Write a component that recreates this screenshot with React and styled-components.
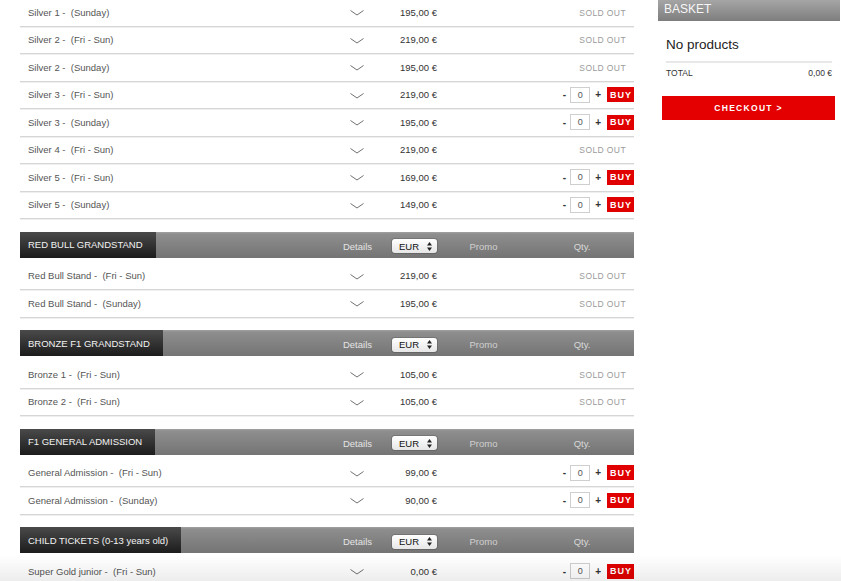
import React from "react";
import styled, { createGlobalStyle } from "styled-components";

const GlobalStyle = createGlobalStyle`
  html, body {
    margin: 0;
    padding: 0;
    background: #fff;
    font-family: "Liberation Sans", Arial, sans-serif;
  }
`;

const COLS = "1fr 45px 57px 93px 104px";

const Page = styled.div`
  display: flex;
  align-items: flex-start;
  gap: 24px;
  padding-left: 20px;
  height: 581px;
  overflow: hidden;
`;

const List = styled.div`
  width: 614px;
  margin-top: -1px;
  flex-shrink: 0;
`;

const Section = styled.div`
  margin-bottom: 12.5px;
`;

const Header = styled.div`
  display: grid;
  grid-template-columns: ${COLS};
  align-items: center;
  height: 26px;
  margin-bottom: 5px;
  background: linear-gradient(#a2a2a2 0, #8e8e8e 2px, #747474 100%);
`;

const Label = styled.div`
  justify-self: start;
  height: 100%;
  display: flex;
  align-items: center;
  padding: 0 13px 0 8px;
  background: linear-gradient(#4a4a4a, #1c1c1c);
  color: #f2f2f2;
  font-size: 9.5px;
  white-space: nowrap;
`;

const HeadText = styled.div`
  justify-self: ${(p) => p.$align || "center"};
  padding-top: 3px;
  color: ${(p) => p.$color || "#e4e4e4"};
  font-size: 9.5px;
`;

const Select = styled.div`
  justify-self: end;
  box-sizing: border-box;
  width: 45px;
  height: 14px;
  margin-top: 3px;
  padding: 0 5px 0 7px;
  display: flex;
  align-items: center;
  justify-content: space-between;
  border-radius: 3px;
  background: linear-gradient(#ffffff, #e6e6e6);
  box-shadow: 0 0 0 1px rgba(0, 0, 0, 0.15);
  font-size: 9.5px;
  color: #111;
`;

const Row = styled.div`
  display: grid;
  grid-template-columns: ${COLS};
  align-items: center;
  box-sizing: border-box;
  height: 27.5px;
  border-bottom: 1px solid #d6d6d6;
  box-shadow: 0 1px 0 #efefef;
`;

const Name = styled.div`
  padding-left: 8px;
  color: #555;
  font-size: 9.5px;
  white-space: pre;
`;

const Chevron = styled.svg`
  justify-self: center;
  margin-left: -2px;
  margin-top: 2px;
`;

const Price = styled.div`
  justify-self: end;
  color: #333;
  font-size: 9.5px;
  white-space: nowrap;
`;

const QtyCell = styled.div`
  grid-column: 5;
  justify-self: end;
  display: flex;
  align-items: center;
`;

const SoldOut = styled.span`
  margin: 1px 8px 0 0;
  color: #9a9a9a;
  font-size: 8.5px;
  letter-spacing: 0.4px;
`;

const Sign = styled.span`
  color: #333;
  font-size: 10px;
  font-weight: bold;
  margin: 0 ${(p) => p.$gap}px 0 0;
`;

const QtyInput = styled.div`
  box-sizing: border-box;
  width: 20px;
  height: 16px;
  margin-right: 5px;
  display: flex;
  align-items: center;
  justify-content: center;
  border: 1px solid #cfcfcf;
  background: #fff;
  color: #555;
  font-size: 9px;
`;

const Buy = styled.span`
  width: 27px;
  height: 15px;
  display: flex;
  align-items: center;
  justify-content: center;
  background: #e00000;
  color: #fff;
  font-size: 9px;
  font-weight: bold;
  letter-spacing: 1px;
  padding-left: 1px;
  box-sizing: border-box;
`;

const Basket = styled.aside`
  width: 182px;
  flex-shrink: 0;
`;

const BasketHead = styled.div`
  height: 21px;
  box-sizing: border-box;
  padding: 2px 0 0 6px;
  background: linear-gradient(#a5a5a5, #7e7e7e);
  color: #f6f6f6;
  font-size: 12px;
`;

const BasketBody = styled.div`
  padding: 16px 8px 0 8px;
`;

const Empty = styled.div`
  font-size: 13.5px;
  color: #222;
  padding-bottom: 9px;
  border-bottom: 2px solid #e8e8e8;
`;

const TotalRow = styled.div`
  display: flex;
  justify-content: space-between;
  padding-top: 5px;
  font-size: 8.5px;
  color: #333;
`;

const Checkout = styled.div`
  margin: 18px 5px 0 4px;
  height: 24px;
  display: flex;
  align-items: center;
  justify-content: center;
  background: #e40000;
  color: #fff;
  font-size: 8.5px;
  font-weight: bold;
  letter-spacing: 1.3px;
`;

const Fade = styled.div`
  position: fixed;
  left: 0;
  right: 0;
  bottom: 0;
  height: 26px;
  pointer-events: none;
  background: linear-gradient(rgba(0, 0, 0, 0), rgba(0, 0, 0, 0.07));
`;

const sections = [
  {
    title: null,
    rows: [
      ["Silver 1 -  (Sunday)", "195,00 €", false],
      ["Silver 2 -  (Fri - Sun)", "219,00 €", false],
      ["Silver 2 -  (Sunday)", "195,00 €", false],
      ["Silver 3 -  (Fri - Sun)", "219,00 €", true],
      ["Silver 3 -  (Sunday)", "195,00 €", true],
      ["Silver 4 -  (Fri - Sun)", "219,00 €", false],
      ["Silver 5 -  (Fri - Sun)", "169,00 €", true],
      ["Silver 5 -  (Sunday)", "149,00 €", true],
    ],
  },
  {
    title: "RED BULL GRANDSTAND",
    rows: [
      ["Red Bull Stand -  (Fri - Sun)", "219,00 €", false],
      ["Red Bull Stand -  (Sunday)", "195,00 €", false],
    ],
  },
  {
    title: "BRONZE F1 GRANDSTAND",
    rows: [
      ["Bronze 1 -  (Fri - Sun)", "105,00 €", false],
      ["Bronze 2 -  (Fri - Sun)", "105,00 €", false],
    ],
  },
  {
    title: "F1 GENERAL ADMISSION",
    rows: [
      ["General Admission -  (Fri - Sun)", "99,00 €", true],
      ["General Admission -  (Sunday)", "90,00 €", true],
    ],
  },
  {
    title: "CHILD TICKETS (0-13 years old)",
    rows: [["Super Gold junior -  (Fri - Sun)", "0,00 €", true]],
  },
];

const Ticket = ({ name, price, available }) => (
  <Row>
    <Name>{name}</Name>
    <Chevron width="14" height="6" viewBox="0 0 14 6">
      <polyline points="0.5,0.5 7,5 13.5,0.5" fill="none" stroke="#707070" strokeWidth="1" />
    </Chevron>
    <Price>{price}</Price>
    <QtyCell>
      {available ? (
        <>
          <Sign $gap={4}>-</Sign>
          <QtyInput>0</QtyInput>
          <Sign $gap={6}>+</Sign>
          <Buy>BUY</Buy>
        </>
      ) : (
        <SoldOut>SOLD OUT</SoldOut>
      )}
    </QtyCell>
  </Row>
);

const App = () => {
  return (
    <>
      <GlobalStyle />
      <Page>
        <List>
          {sections.map((s, i) => (
            <Section key={i}>
              {s.title && (
                <Header>
                  <Label>{s.title}</Label>
                  <HeadText>Details</HeadText>
                  <Select>
                    EUR
                    <svg width="5" height="9" viewBox="0 0 5 9">
                      <polygon points="2.5,0 5,3.5 0,3.5" fill="#222" />
                      <polygon points="0,5.5 5,5.5 2.5,9" fill="#222" />
                    </svg>
                  </Select>
                  <HeadText $color="#d0d0d0">Promo</HeadText>
                  <HeadText $color="#d8d8d8">Qty.</HeadText>
                </Header>
              )}
              {s.rows.map((r) => (
                <Ticket key={r[0]} name={r[0]} price={r[1]} available={r[2]} />
              ))}
            </Section>
          ))}
        </List>
        <Basket>
          <BasketHead>BASKET</BasketHead>
          <BasketBody>
            <Empty>No products</Empty>
            <TotalRow>
              <span>TOTAL</span>
              <span>0,00 €</span>
            </TotalRow>
          </BasketBody>
          <Checkout>CHECKOUT &gt;</Checkout>
        </Basket>
      </Page>
      <Fade />
    </>
  );
};

export default App;
